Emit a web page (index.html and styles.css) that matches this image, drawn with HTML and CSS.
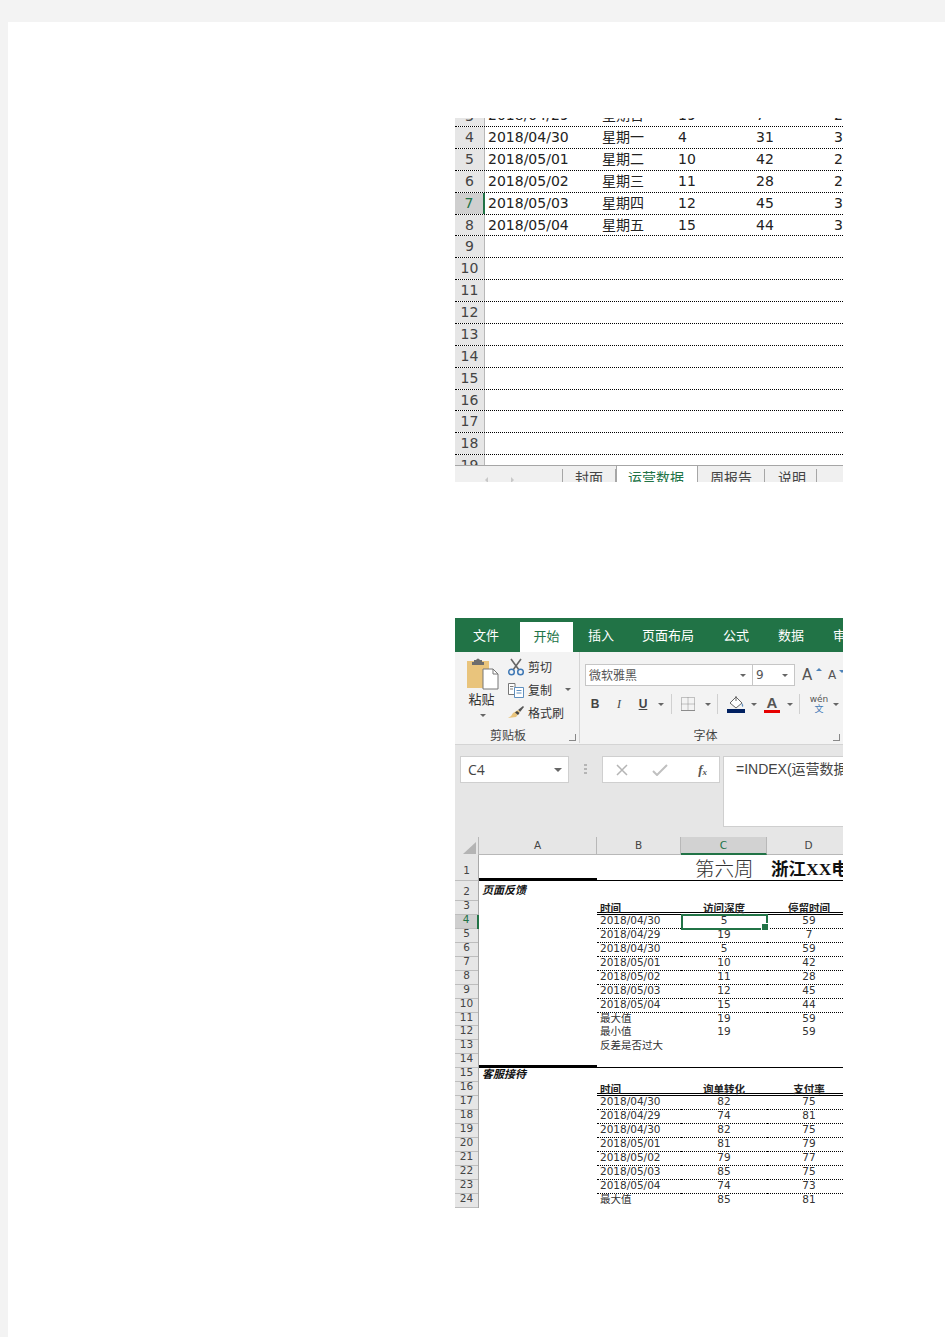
FILE: index.html
```html
<!DOCTYPE html>
<html lang="zh">
<head>
<meta charset="utf-8">
<title>运营数据</title>
<link rel="stylesheet" href="styles.css">
</head>
<body>
<main class="page">
  <section class="shot shot-top">
    <div class="big-rows">
      <div class="br br-cut"><div class="brh">3</div><div class="brc">2018/04/29</div><div class="brw">星期日</div><div class="brn">19</div><div class="brn">7</div><div class="brn">2</div></div>
      <div class="br"><div class="brh">4</div><div class="brc">2018/04/30</div><div class="brw">星期一</div><div class="brn">4</div><div class="brn">31</div><div class="brn">34</div></div>
      <div class="br"><div class="brh">5</div><div class="brc">2018/05/01</div><div class="brw">星期二</div><div class="brn">10</div><div class="brn">42</div><div class="brn">26</div></div>
      <div class="br"><div class="brh">6</div><div class="brc">2018/05/02</div><div class="brw">星期三</div><div class="brn">11</div><div class="brn">28</div><div class="brn">27</div></div>
      <div class="br"><div class="brh brh-on">7</div><div class="brc">2018/05/03</div><div class="brw">星期四</div><div class="brn">12</div><div class="brn">45</div><div class="brn">32</div></div>
      <div class="br"><div class="brh">8</div><div class="brc">2018/05/04</div><div class="brw">星期五</div><div class="brn">15</div><div class="brn">44</div><div class="brn">37</div></div>
      <div class="br"><div class="brh">9</div></div>
      <div class="br"><div class="brh">10</div></div>
      <div class="br"><div class="brh">11</div></div>
      <div class="br"><div class="brh">12</div></div>
      <div class="br"><div class="brh">13</div></div>
      <div class="br"><div class="brh">14</div></div>
      <div class="br"><div class="brh">15</div></div>
      <div class="br"><div class="brh">16</div></div>
      <div class="br"><div class="brh">17</div></div>
      <div class="br"><div class="brh">18</div></div>
      <div class="br br-last"><div class="brh">19</div></div>
    </div>
    <div class="sheet-tabs">
      <div class="tab-nav"><span class="nav-l"></span><span class="nav-r"></span></div>
      <div class="stab">封面</div>
      <div class="stab stab-on">运营数据</div>
      <div class="stab stab-3">周报告</div>
      <div class="stab stab-4">说明</div>
    </div>
  </section>

  <section class="shot shot-bottom">
    <nav class="menu">
      <span class="mi mi-1">文件</span>
      <span class="mi mi-on">开始</span>
      <span class="mi mi-3">插入</span>
      <span class="mi mi-4">页面布局</span>
      <span class="mi mi-5">公式</span>
      <span class="mi mi-5">数据</span>
      <span class="mi mi-5">审阅</span>
    </nav>

    <div class="ribbon">
      <div class="group group-clip">
        <div class="group-body clip-body">
          <div class="paste">
            <svg class="paste-ico" width="33" height="32" viewBox="0 0 33 32">
              <rect x="1" y="3" width="22" height="27" fill="#e9c47c"/>
              <path d="M8 4 V2 H10 Q12 -1 14 2 H16 V4 H18 V7 H6 V4 Z" fill="#6d6d6d"/>
              <path d="M17 11 H27 L32 16 V31 H17 Z" fill="#fff" stroke="#777" stroke-width="1"/>
              <path d="M27 11 V16 H32" fill="none" stroke="#777"/>
            </svg>
            <span class="paste-label">粘贴</span>
            <i class="caret"></i>
          </div>
          <div class="clip-list">
            <div class="clip-item">
              <svg width="18" height="18" viewBox="0 0 18 18"><path d="M4 1 L12 12 M14 1 L6 12" stroke="#666" stroke-width="1.6" fill="none"/><circle cx="4.5" cy="14" r="2.8" fill="none" stroke="#3f78b5" stroke-width="1.5"/><circle cx="13.5" cy="14" r="2.8" fill="none" stroke="#3f78b5" stroke-width="1.5"/></svg>
              <span>剪切</span>
            </div>
            <div class="clip-item">
              <svg width="18" height="18" viewBox="0 0 18 18"><path d="M1.500 2.500 H8 V13.500 H1.500 Z M3 5.500 H6.500 M3 8 H6" fill="#fff" stroke="#777"/><path d="M7.500 6.500 H16.500 V16.500 H7.500 Z M9.500 9.500 H14.500 M9.500 12 H14.500" fill="#fff" stroke="#5f8fbe"/></svg>
              <span>复制</span>
              <i class="caret caret-copy"></i>
            </div>
            <div class="clip-item">
              <svg width="18" height="18" viewBox="0 0 18 18"><path d="M11 6 L16 2 L17 3 L13 8 Z" fill="#555"/><path d="M11 6 L13 8 L9 13 L1 14 Q5 12 6 9 Z" fill="#e9c47c"/><path d="M10 7 L12.500 9 L11 11 L8 8.500 Z" fill="#444"/></svg>
              <span>格式刷</span>
            </div>
          </div>
        </div>
        <div class="group-label label-clip"><span>剪贴板</span><i class="launch"></i></div>
      </div>

      <div class="group group-font">
        <div class="group-body font-body">
          <div class="font-row-1">
            <div class="combo combo-name"><span>微软雅黑</span><i class="caret"></i></div>
            <div class="combo combo-size"><span>9</span><i class="caret"></i></div>
            <div class="grow-a">A<i class="tick-up"></i></div>
            <div class="shrink-a">A<i class="tick-down"></i></div>
          </div>
          <div class="font-row-2">
            <span class="fb fb-b">B</span>
            <span class="fb fb-i">I</span>
            <span class="fb fb-u">U</span>
            <i class="caret"></i>
            <i class="vsep"></i>
            <svg class="ic-border" width="16" height="16" viewBox="0 0 16 16"><path d="M1.500 1.500 H14.500 V14.500 H1.500 Z M8 1.500 V14.500 M1.500 8 H14.500" fill="none" stroke="#8c8c8c" stroke-dasharray="1 1"/><path d="M1 14.500 H15" stroke="#8c8c8c"/></svg>
            <i class="caret caret-a"></i>
            <i class="vsep vsep-a"></i>
            <svg class="ic-fill" width="18" height="18" viewBox="0 0 18 18"><path d="M3 8 L9 2 L15 8 L9 13 Z" fill="#fff" stroke="#666"/><path d="M9 1 V6" stroke="#666"/><path d="M15 8 Q17 10 16 12 Q14 11 15 8" fill="#5f8fbe"/><rect x="0" y="14" width="18" height="4" fill="#002060"/></svg>
            <i class="caret caret-b"></i>
            <span class="ic-color">A</span>
            <i class="caret caret-c"></i>
            <i class="vsep vsep-a"></i>
            <span class="ic-wen"><small>wén</small><b>文</b></span>
            <i class="caret caret-d"></i>
          </div>
        </div>
        <div class="group-label label-font"><span>字体</span><i class="launch"></i></div>
      </div>
    </div>

    <div class="formula">
      <div class="namebox"><span>C4</span><i class="caret"></i></div>
      <div class="dots"></div>
      <div class="fx-box">
        <svg width="12" height="12" viewBox="0 0 12 12"><path d="M1 1 L11 11 M11 1 L1 11" stroke="#b5b5b5" stroke-width="1.500"/></svg>
        <svg class="fx-ok" width="16" height="12" viewBox="0 0 16 12"><path d="M1 7 L5 11 L15 1" fill="none" stroke="#c0c0c0" stroke-width="2"/></svg>
        <span class="fx">f<sub>x</sub></span>
      </div>
      <div class="formula-input">=INDEX(运营数据</div>
    </div>

    <div class="col-head">
      <div class="corner"><svg width="15" height="14" viewBox="0 0 15 14"><path d="M14 1 V13 H1 Z" fill="#b4b4b4"/></svg></div>
      <div class="ch ch-a">A</div>
      <div class="ch ch-b">B</div>
      <div class="ch ch-c">C</div>
      <div class="ch ch-d">D</div>
    </div>

    <div class="sheet">
      <div class="row row-1 thick"><div class="rh">1</div><div class="ca"></div><div class="cb"></div><div class="cc title-l">第六周</div><div class="cd title-b">浙江<span class="serif">XX</span>电商</div></div>
      <div class="row row-2"><div class="rh">2</div><div class="ca sec">页面反馈</div><div class="cb"></div><div class="cc"></div><div class="cd"></div></div>
      <div class="row dbl"><div class="rh">3</div><div class="ca"></div><div class="cb hd">时间</div><div class="cc hd">访问深度</div><div class="cd hd">停留时间</div></div>
      <div class="row dot"><div class="rh rh-on">4</div><div class="ca"></div><div class="cb">2018/04/30</div><div class="cc cell-sel">5<i class="sel"><b class="handle"></b></i></div><div class="cd">59</div></div>
      <div class="row dot"><div class="rh">5</div><div class="ca"></div><div class="cb">2018/04/29</div><div class="cc">19</div><div class="cd">7</div></div>
      <div class="row dot"><div class="rh">6</div><div class="ca"></div><div class="cb">2018/04/30</div><div class="cc">5</div><div class="cd">59</div></div>
      <div class="row dot"><div class="rh">7</div><div class="ca"></div><div class="cb">2018/05/01</div><div class="cc">10</div><div class="cd">42</div></div>
      <div class="row dot"><div class="rh">8</div><div class="ca"></div><div class="cb">2018/05/02</div><div class="cc">11</div><div class="cd">28</div></div>
      <div class="row dot"><div class="rh">9</div><div class="ca"></div><div class="cb">2018/05/03</div><div class="cc">12</div><div class="cd">45</div></div>
      <div class="row dot"><div class="rh">10</div><div class="ca"></div><div class="cb">2018/05/04</div><div class="cc">15</div><div class="cd">44</div></div>
      <div class="row"><div class="rh">11</div><div class="ca"></div><div class="cb">最大值</div><div class="cc">19</div><div class="cd">59</div></div>
      <div class="row"><div class="rh">12</div><div class="ca"></div><div class="cb">最小值</div><div class="cc">19</div><div class="cd">59</div></div>
      <div class="row"><div class="rh">13</div><div class="ca"></div><div class="cb">反差是否过大</div><div class="cc"></div><div class="cd"></div></div>
      <div class="row thick"><div class="rh">14</div><div class="ca"></div><div class="cb"></div><div class="cc"></div><div class="cd"></div></div>
      <div class="row"><div class="rh">15</div><div class="ca sec">客服接待</div><div class="cb"></div><div class="cc"></div><div class="cd"></div></div>
      <div class="row dbl"><div class="rh">16</div><div class="ca"></div><div class="cb hd">时间</div><div class="cc hd">询单转化</div><div class="cd hd">支付率</div></div>
      <div class="row dot"><div class="rh">17</div><div class="ca"></div><div class="cb">2018/04/30</div><div class="cc">82</div><div class="cd">75</div></div>
      <div class="row dot"><div class="rh">18</div><div class="ca"></div><div class="cb">2018/04/29</div><div class="cc">74</div><div class="cd">81</div></div>
      <div class="row dot"><div class="rh">19</div><div class="ca"></div><div class="cb">2018/04/30</div><div class="cc">82</div><div class="cd">75</div></div>
      <div class="row dot"><div class="rh">20</div><div class="ca"></div><div class="cb">2018/05/01</div><div class="cc">81</div><div class="cd">79</div></div>
      <div class="row dot"><div class="rh">21</div><div class="ca"></div><div class="cb">2018/05/02</div><div class="cc">79</div><div class="cd">77</div></div>
      <div class="row dot"><div class="rh">22</div><div class="ca"></div><div class="cb">2018/05/03</div><div class="cc">85</div><div class="cd">75</div></div>
      <div class="row dot"><div class="rh">23</div><div class="ca"></div><div class="cb">2018/05/04</div><div class="cc">74</div><div class="cd">73</div></div>
      <div class="row"><div class="rh">24</div><div class="ca"></div><div class="cb">最大值</div><div class="cc">85</div><div class="cd">81</div></div>
      <div class="row"><div class="rh">25</div><div class="ca"></div><div class="cb"></div><div class="cc"></div><div class="cd"></div></div>
    </div>
  </section>
</main>
</body>
</html>
```

FILE: styles.css
```css
* { box-sizing: border-box; }
html, body { margin: 0; height: 100%; }
body {
  background: #f3f3f3;
  padding: 22px 0 0 8px;
  font-family: "DejaVu Sans", "Noto Sans CJK SC", sans-serif;
  overflow: hidden;
}
.page {
  background: #fff;
  height: 1315px;
  padding: 96px 0 0 447px;
  display: flex;
  flex-direction: column;
  gap: 136px;
}
.shot { width: 388px; overflow: hidden; flex: none; }
.shot-top { height: 364px; display: flex; flex-direction: column; }
.shot-bottom { height: 590px; }

/* top capture */
.big-rows { height: 347px; overflow: hidden; flex: none; }
.br {
  height: 21.875px;
  display: flex;
  align-items: stretch;
  font-size: 14px;
  line-height: 21px;
  color: #222;
  border-bottom: 1px dotted #000;
  overflow: hidden;
}
.br-cut { height: 9px; align-items: flex-end; }
.br-cut > div { height: 21px; flex: none; }
.br-last { border-bottom: 0; }
.brh {
  width: 30px;
  flex: none;
  background: #e6e6e6;
  border-right: 1px solid #b8b8b8;
  text-align: center;
  font-size: 14px;
  color: #444;
  margin-bottom: -1px;
  box-shadow: inset 0 -1px 0 #b4b4b4;
}
.brh-on { background: #cfcfcf; color: #217346; border-right: 2px solid #217346; }
.brc { width: 117px; padding-left: 3px; flex: none; }
.brw { width: 76px; flex: none; font-family: "Noto Sans CJK SC", sans-serif; line-height: 19px; }
.brn { width: 78px; flex: none; }

.sheet-tabs {
  height: 17px;
  flex: none;
  display: flex;
  background: #f0f0f0;
  border-top: 1px solid #a6a6a6;
  font-family: "Noto Sans CJK SC", sans-serif;
  font-size: 14px;
  line-height: 20px;
  color: #444;
  overflow: hidden;
}
.tab-nav {
  width: 108px;
  flex: none;
  display: flex;
  align-items: center;
  gap: 23px;
  padding: 8px 0 0 30px;
  border-right: 1px solid #a6a6a6;
  height: 14px;
  margin-top: 3px;
}
.nav-l, .nav-r { width: 0; height: 0; border: 3px solid transparent; }
.nav-l { border-right-color: #c8c8c8; border-left-width: 0; }
.nav-r { border-left-color: #c8c8c8; border-right-width: 0; }
.stab { padding: 1px 13px 0 12px; position: relative; white-space: nowrap; }
.stab::after {
  content: "";
  position: absolute;
  right: 0;
  top: 3px;
  width: 1px;
  height: 14px;
  background: #a6a6a6;
}
.stab-on {
  margin-top: -1px;
  padding: 2px 13px 0 11px;
  background: #fff;
  color: #217346;
  border-left: 1px solid #a6a6a6;
  border-right: 1px solid #a6a6a6;
}
.stab-on::after { display: none; }
.stab-3 { padding-left: 12px; }
.stab-4 { padding: 1px 11px 0 13px; }

/* menu */
.menu {
  height: 34px;
  background: #217346;
  display: flex;
  font-family: "Noto Sans CJK SC", sans-serif;
  font-size: 13px;
  line-height: 34px;
  color: #fff;
  overflow: hidden;
  white-space: nowrap;
}
.mi { flex: none; }
.mi-1 { padding: 0 21px 0 18px; }
.mi-on { width: 53px; text-align: center; background: #fff; color: #217346; margin-top: 4px; line-height: 27px; height: 30px; }
.mi-3 { padding: 0 28px 0 15px; }
.mi-4 { padding: 0 29px 0 0; }
.mi-5 { padding: 0 29px 0 0; }

/* ribbon */
.ribbon {
  height: 93px;
  background: #f3f3f3;
  display: flex;
  border-bottom: 1px solid #d4d4d4;
  font-family: "Noto Sans CJK SC", sans-serif;
  color: #444;
}
.group { display: flex; flex-direction: column; flex: none; height: 91px; }
.group-clip { width: 125px; border-right: 1px solid #d4d4d4; }
.group-font { width: 263px; }
.group-body { flex: 1; min-height: 0; }
.group-label {
  height: 24px;
  flex: none;
  text-align: center;
  font-size: 12px;
  line-height: 32px;
  position: relative;
  color: #444;
}
.label-clip { padding-right: 18px; }
.label-font { padding-right: 12px; }
.launch {
  position: absolute;
  right: 3px;
  bottom: 2px;
  width: 7px;
  height: 7px;
  border-left: 1px solid #888;
  border-bottom: 1px solid #888;
  transform: scaleX(-1);
}
.caret {
  display: inline-block;
  width: 0;
  height: 0;
  border: 3px solid transparent;
  border-top: 3px solid #666;
  border-bottom: 0;
  flex: none;
}
.clip-body { display: flex; padding: 6px 0 0 11px; }
.paste { width: 33px; display: flex; flex-direction: column; align-items: center; font-size: 13px; }
.paste-ico { display: block; flex: none; }
.paste-label { line-height: 16px; margin-top: 1px; color: #333; margin-left: -2px; }
.paste .caret { margin-top: 7px; }
.clip-list { margin: -3px 0 0 8px; display: flex; flex-direction: column; }
.clip-item {
  height: 23px;
  flex: none;
  display: flex;
  align-items: center;
  gap: 3px;
  font-size: 12px;
  color: #333;
  white-space: nowrap;
}
.clip-item svg { flex: none; }
.caret-copy { margin-left: 10px; }

.font-body { padding: 12px 0 0 5px; }
.font-row-1 { display: flex; height: 22px; align-items: center; }
.combo {
  height: 22px;
  background: #fff;
  border: 1px solid #c6c6c6;
  display: flex;
  align-items: center;
  justify-content: space-between;
  padding: 0 6px 0 3px;
  font-size: 12px;
  line-height: 18px;
  color: #555;
}
.combo-name { width: 168px; }
.combo-size { width: 43px; margin-left: -1px; font-family: "DejaVu Sans", sans-serif; }
.grow-a, .shrink-a {
  font-family: "DejaVu Sans", sans-serif;
  position: relative;
  color: #555;
}
.grow-a { font-size: 15px; margin-left: 7px; width: 15px; }
.shrink-a { font-size: 12px; margin-left: 11px; width: 12px; }
.tick-up, .tick-down {
  position: absolute;
  right: -5px;
  top: 2px;
  border: 3px solid transparent;
  border-top: 0;
  border-bottom: 3px solid #4d82b8;
}
.tick-down { border-bottom: 0; border-top: 3px solid #4d82b8; }
.font-row-2 { display: flex; align-items: center; height: 20px; margin: 8px 0 0 -2px; }
.fb { width: 24px; flex: none; text-align: center; font-family: "Liberation Sans", sans-serif; font-size: 12px; color: #444; }
.fb-b { font-weight: 700; }
.fb-i { font-family: "Liberation Serif", serif; font-style: italic; }
.fb-u { text-decoration: underline; font-weight: 700; }
.font-row-2 > .caret { margin: 0 3px; }
.vsep { width: 1px; height: 20px; background: #d0d0d0; flex: none; margin-left: 4px; }
.vsep-a { margin-left: 3px; }
.ic-border { margin-left: 8px; flex: none; }
.font-row-2 > .caret-a { margin-left: 9px; }
.ic-fill { margin-left: 9px; flex: none; }
.font-row-2 > .caret-b { margin-left: 6px; }
.ic-color {
  width: 16px;
  margin-left: 4px;
  flex: none;
  text-align: center;
  font: 700 15px/15px "Liberation Sans", sans-serif;
  color: #555;
  border-bottom: 3px solid #e60000;
}
.font-row-2 > .caret-c { margin-left: 7px; }
.ic-wen {
  width: 20px;
  margin-left: 9px;
  flex: none;
  display: flex;
  flex-direction: column;
  align-items: center;
  color: #555;
}
.ic-wen small { font: 9px/10px "DejaVu Sans", sans-serif; }
.ic-wen b { font-weight: 400; color: #3f78b5; font-size: 9px; line-height: 10px; }
.font-row-2 > .caret-d { margin-left: 4px; }

/* formula bar */
.formula {
  height: 92px;
  background: #e6e6e6;
  display: flex;
  align-items: flex-start;
  padding: 11px 0 0 5px;
}
.namebox {
  width: 109px;
  height: 27px;
  flex: none;
  background: #fff;
  border: 1px solid #cfcfcf;
  display: flex;
  align-items: center;
  justify-content: space-between;
  padding: 0 6px 0 7px;
  font: 14px "Open Sans", sans-serif;
  color: #444;
}
.namebox .caret { border-width: 4px 4px 0; }
.dots {
  width: 3px;
  height: 11px;
  flex: none;
  margin: 8px 15px 0;
  background: repeating-linear-gradient(#b5b5b5 0 2px, transparent 2px 4px);
}
.fx-box {
  width: 118px;
  height: 27px;
  flex: none;
  background: #fff;
  border: 1px solid #cfcfcf;
  display: flex;
  align-items: center;
  padding: 0 12px 0 13px;
}
.fx-ok { margin-left: 24px; }
.fx {
  margin-left: auto;
  font: italic 700 13px "Liberation Serif", serif;
  color: #555;
}
.fx sub { font-size: 9px; vertical-align: -1px; line-height: 0; }
.formula-input {
  width: 121px;
  height: 71px;
  flex: none;
  margin-left: 3px;
  background: #fff;
  border: 1px solid #cfcfcf;
  border-right: 0;
  padding: 2px 0 0 12px;
  font: 14px/20px "Liberation Sans", "Noto Sans CJK SC", sans-serif;
  color: #444;
  white-space: nowrap;
  overflow: hidden;
}

/* sheet */
.col-head {
  height: 18px;
  display: flex;
  background: #e6e6e6;
  font-size: 10.500px;
  line-height: 16px;
  color: #444;
  text-align: center;
}
.corner { width: 24px; flex: none; border-right: 1px solid #b8b8b8; display: flex; align-items: flex-end; justify-content: flex-end; padding-right: 1px; }
.ch { border-right: 1px solid #b8b8b8; border-bottom: 1px solid #b8b8b8; flex: none; }
.ch-a { width: 118px; }
.ch-b { width: 84px; }
.ch-c { width: 86px; background: #d2d2d2; border-bottom: 2px solid #217346; color: #217346; }
.ch-d { width: 84px; }

.sheet { overflow: hidden; height: 353px; }
.row {
  height: 13.950px;
  display: flex;
  font-size: 10.500px;
  line-height: 10px;
  color: #333;
  white-space: nowrap;
}
.row > div { flex: none; }
.rh {
  width: 24px;
  background: #e6e6e6;
  border-right: 1px solid #a8a8a8;
  box-shadow: inset 0 -1px 0 #bdbdbd;
  text-align: center;
  font-size: 10.500px;
  line-height: 9px;
  color: #444;
}
.rh-on { background: #cfcfcf; color: #217346; border-right: 2px solid #217346; }
.ca { width: 118px; }
.cb { width: 84px; padding-left: 3px; font-family: "DejaVu Sans", "Noto Sans CJK SC", sans-serif; }
.cc { width: 86px; text-align: center; }
.cd { width: 84px; text-align: center; }
.row-1 { height: 26px; line-height: 25px; }
.row-1 .rh { line-height: 30px; }
.row-2 { height: 20px; line-height: 17px; }
.row-2 .rh { line-height: 21px; }
.sec {
  font-family: "Noto Sans CJK SC", sans-serif;
  font-weight: 700;
  font-style: italic;
  font-size: 11px;
  padding-left: 3px;
  color: #111;
}
.hd {
  font-family: "Noto Sans CJK SC", sans-serif;
  font-weight: 700;
  color: #222;
  line-height: 14px;
}
.dot > .cb, .dot > .cc, .dot > .cd { border-bottom: 1px dotted #000; }
.dbl > .cb, .dbl > .cc, .dbl > .cd { border-bottom: 3px double #000; }
.thick > .ca { border-bottom: 3px solid #000; }
.thick > .cb, .thick > .cc, .thick > .cd { border-bottom: 1px solid #000; }
.title-l {
  font-family: "Noto Sans CJK SC", sans-serif;
  font-size: 19.500px;
  font-weight: 300;
  text-align: left !important;
  padding-left: 14px;
}
.title-b {
  font-family: "Noto Sans CJK SC", sans-serif;
  font-size: 17.500px;
  font-weight: 700;
  text-align: left !important;
  padding-left: 4px;
  color: #111;
  overflow: hidden;
}
.serif { font-family: "Liberation Serif", serif; }
.cell-sel { position: relative; }
.sel {
  position: absolute;
  left: 0;
  top: -1px;
  width: 87px;
  height: 16px;
  border: 2px solid #217346;
}
.handle {
  position: absolute;
  right: -3px;
  bottom: -3px;
  width: 6px;
  height: 6px;
  background: #217346;
  border: 1px solid #fff;
  box-sizing: content-box;
}
```
